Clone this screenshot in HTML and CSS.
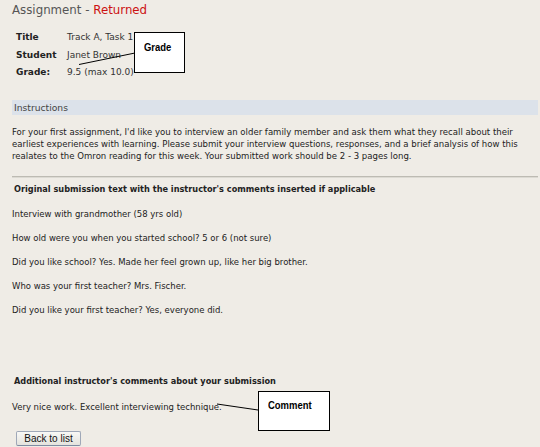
FILE: index.html
```html
<!DOCTYPE html>
<html>
<head>
<meta charset="utf-8">
<link rel="stylesheet" href="styles.css">
</head>
<body>
<div class="page">
  <h1 class="title">Assignment - <span class="status">Returned</span></h1>
  <div class="info">
    <div class="row"><span class="lbl">Title</span><span class="val">Track A, Task 1</span></div>
    <div class="row"><span class="lbl">Student</span><span class="val">Janet Brown</span></div>
    <div class="row"><span class="lbl">Grade:</span><span class="val">9.5 (max 10.0)</span></div>
  </div>
  <div class="bar">Instructions</div>
  <p class="instr">For your first assignment, I'd like you to interview an older family member and ask them what they recall about their earliest experiences with learning. Please submit your interview questions, responses, and a brief analysis of how this realates to the Omron reading for this week. Your submitted work should be 2 - 3 pages long.</p>
  <div class="rule"></div>
  <h2 class="sub">Original submission text with the instructor's comments inserted if applicable</h2>
  <div class="submission">
    <p>Interview with grandmother (58 yrs old)</p>
    <p>How old were you when you started school? 5 or 6 (not sure)</p>
    <p>Did you like school? Yes. Made her feel grown up, like her big brother.</p>
    <p>Who was your first teacher? Mrs. Fischer.</p>
    <p>Did you like your first teacher? Yes, everyone did.</p>
  </div>
  <h2 class="sub add">Additional instructor's comments about your submission</h2>
  <p class="comment">Very nice work. Excellent interviewing technique.</p>
  <button class="btn">Back to list</button>
</div>
<svg class="callout-lines" width="540" height="447" viewBox="0 0 540 447">
  <line x1="79" y1="64.5" x2="135" y2="53" stroke="#000" stroke-width="1"/>
  <line x1="217" y1="404" x2="258" y2="410" stroke="#000" stroke-width="1"/>
</svg>
<div class="callout grade-call"><span class="ctext">Grade</span></div>
<div class="callout comment-call"><span class="ctext">Comment</span></div>
</body>
</html>
```
FILE: styles.css
```css
html, body {
  margin: 0;
  padding: 0;
  background: #efece6;
}
body {
  width: 540px;
  height: 447px;
  overflow: hidden;
  position: relative;
  font-family: "DejaVu Sans", Verdana, sans-serif;
  color: #333;
}
.page {
  padding: 0 2px 0 12px;
}
.title {
  margin: 0;
  padding-top: 2px;
  height: 18px;
  font-size: 11.8px;
  font-weight: normal;
  color: #555;
  line-height: 16px;
}
.status {
  color: #cc1111;
}
.info {
  margin-top: 9px;
  padding-left: 4px;
  font-size: 9px;
}
.row {
  display: flex;
  height: 17.5px;
  line-height: 17.5px;
}
.lbl {
  width: 51px;
  font-weight: bold;
  color: #222;
}
.val {
  color: #333;
}
.bar {
  margin-top: 18px;
  height: 15px;
  line-height: 15px;
  background: #dce2ea;
  padding-left: 2px;
  font-size: 9.2px;
  color: #444;
}
.instr {
  margin: 11px 0 0;
  font-size: 8.55px;
  line-height: 12px;
  color: #222;
}
.rule {
  margin-top: 14px;
  height: 1px;
  background: #bdbbb3;
  border-bottom: 1px solid #dcdad3;
}
.sub {
  margin: 5px 0 0 2px;
  font-size: 8.2px;
  font-weight: bold;
  line-height: 12px;
  color: #222;
}
.submission p {
  margin: 12px 0 0;
  font-size: 8.5px;
  line-height: 12px;
  color: #222;
}
.submission p:first-child {
  margin-top: 13px;
}
.add {
  margin-top: 59px;
}
.comment {
  margin: 14px 0 0;
  font-size: 8.5px;
  line-height: 12px;
  color: #222;
}
.btn {
  display: block;
  margin: 18px 0 0 4px;
  width: 65px;
  height: 15px;
  padding: 0;
  font-family: "Liberation Sans", Arial, sans-serif;
  font-size: 10px;
  color: #111;
  background: linear-gradient(#f8f8f6, #e4e3dd);
  border: 1px solid #9fa8b8;
  border-bottom-color: #7f8ca3;
  border-radius: 2px;
}
.callout-lines {
  position: absolute;
  left: 0;
  top: 0;
  pointer-events: none;
}
.callout {
  position: absolute;
  background: #fff;
  border: 1px solid #000;
  font-family: "Liberation Sans", Arial, sans-serif;
  font-weight: bold;
  font-size: 11px;
  color: #000;
  box-sizing: border-box;
  padding: 8px 0 0 0;
}
.ctext {
  display: inline-block;
  transform: scaleX(0.86);
  transform-origin: left center;
}
.grade-call {
  left: 134px;
  top: 32px;
  width: 51px;
  height: 41px;
  padding-left: 9px;
}
.comment-call {
  left: 258px;
  top: 391px;
  width: 72px;
  height: 40px;
  padding-left: 9px;
  padding-top: 7px;
}
```
